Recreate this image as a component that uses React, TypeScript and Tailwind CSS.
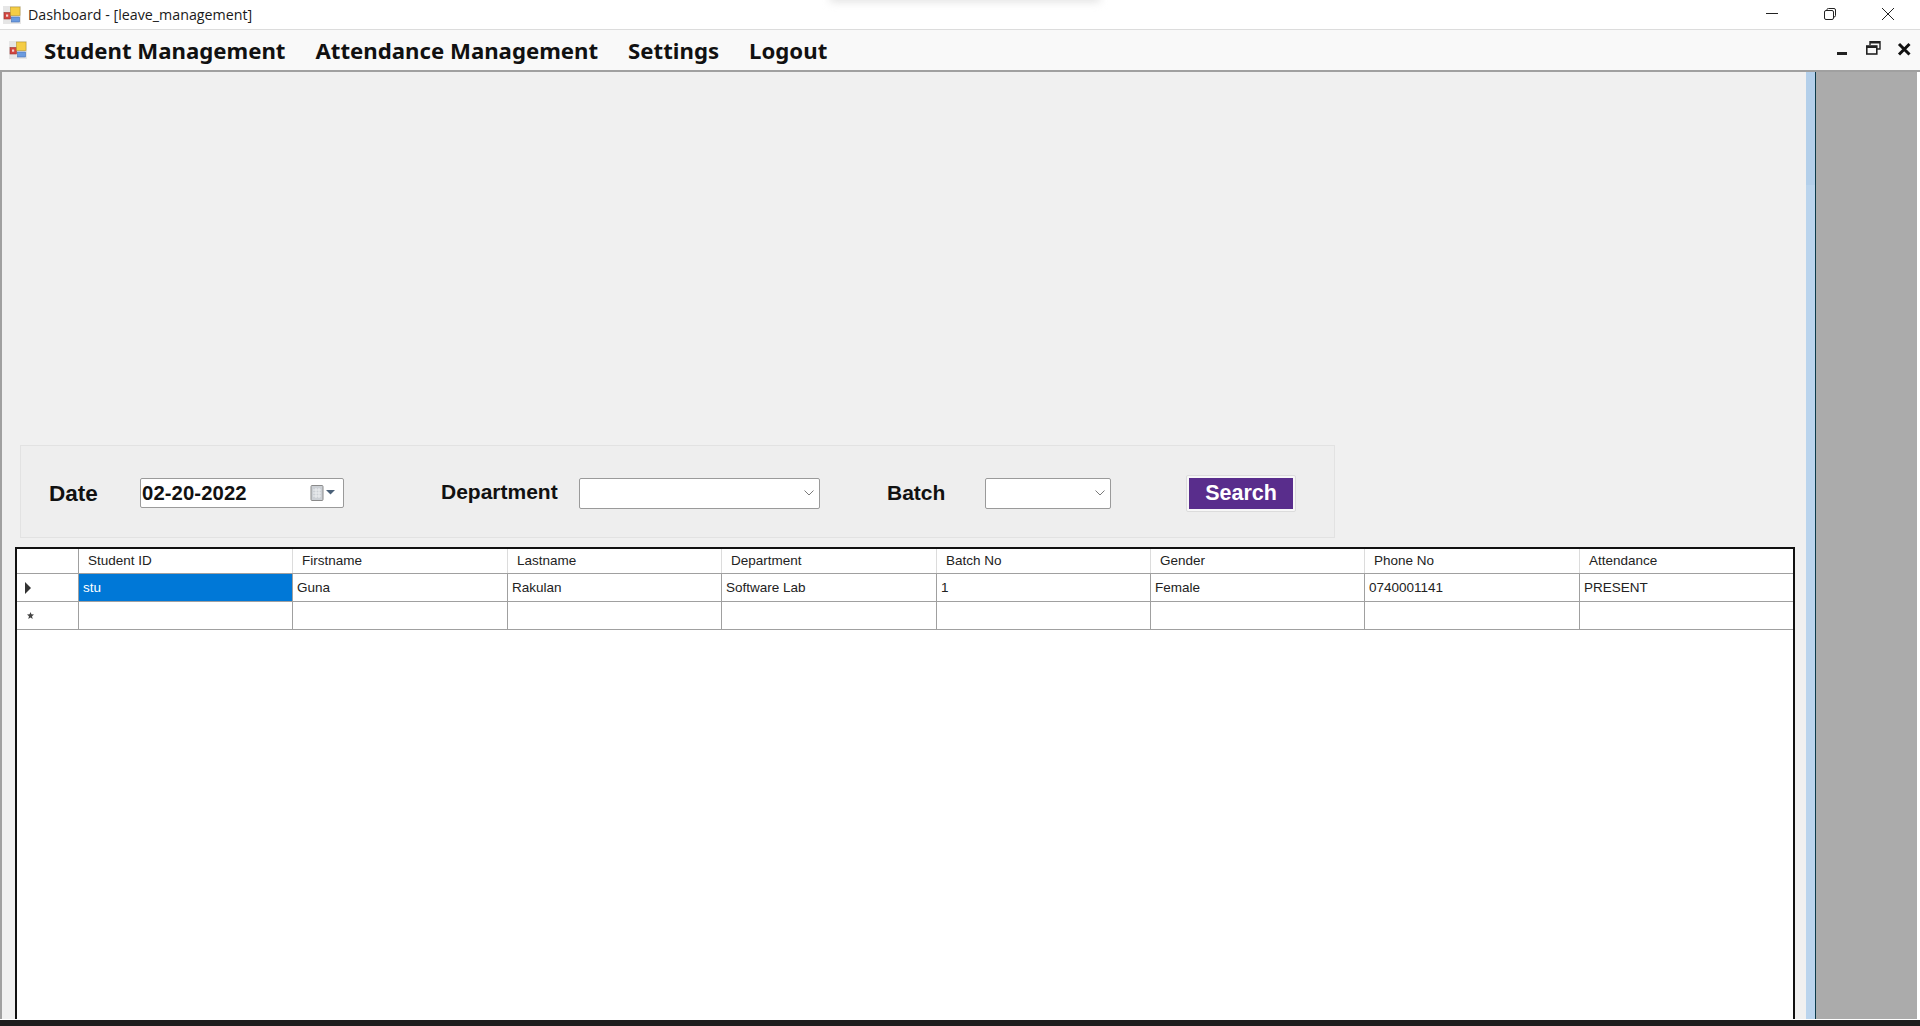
const headers = ["Student ID", "Firstname", "Lastname", "Department", "Batch No", "Gender", "Phone No", "Attendance"];
const row = ["stu", "Guna", "Rakulan", "Software Lab", "1", "Female", "0740001141", "PRESENT"];
const gridCols = "grid grid-cols-[62px_214px_215px_214px_215px_214px_214px_215px_213px]";

const AppIcon = () => (
  <svg width="18" height="18" viewBox="0 0 18 18">
    <rect x="0" y="0" width="18" height="18" fill="#e6e6e6" />
    <rect x="1" y="6.5" width="6.5" height="6.5" fill="#d2453f" stroke="#9a3430" strokeWidth="0.6" />
    <rect x="3" y="8.5" width="2.2" height="2.2" fill="#f3d6d4" />
    <rect x="7.5" y="1" width="9.5" height="8.5" fill="#f5cd45" stroke="#b8962a" strokeWidth="0.6" />
    <rect x="8.5" y="11" width="8" height="5" fill="#6b9be0" stroke="#4470b4" strokeWidth="0.6" />
  </svg>
);

const ComboBox = ({ className }: { className: string }) => (
  <div className={`${className} h-[31px] bg-white border border-[#9a9a9a] rounded-[2px] flex items-center justify-end pr-[5px]`}>
    <svg width="10" height="6" viewBox="0 0 10 6" fill="none" stroke="#7a7a7a" strokeWidth="1">
      <path d="M0.5 0.5 L5 5 L9.5 0.5" />
    </svg>
  </div>
);

const App = () => {
  return (
    <div className="w-[1920px] h-[1026px] flex flex-col overflow-hidden bg-white font-['Liberation_Sans',sans-serif] text-black relative">
      {/* sombra de la ventana de arriba */}
      <div className="absolute left-[830px] top-[-8px] w-[270px] h-[10px] bg-[#e2e2e2] blur-[4px]" />

      {/* title bar */}
      <div className="h-[29px] bg-white flex items-center pl-[3px] pr-[3px] shrink-0">
        <AppIcon />
        <span className="ml-[7px] font-['Open_Sans',sans-serif] text-[14.25px] text-[#1a1a1a]">Dashboard - [leave_management]</span>
        <div className="ml-auto flex">
          <svg width="58" height="29" viewBox="0 0 58 29" fill="none" stroke="#222" strokeWidth="1">
            <path d="M23 13.5 H35" />
          </svg>
          <svg width="58" height="29" viewBox="0 0 58 29" fill="none" stroke="#222" strokeWidth="1">
            <rect x="23.5" y="10.5" width="9" height="9" rx="1.5" />
            <path d="M26 10 V9.5 Q26 8.5 27.5 8.5 H33 Q34.5 8.5 34.5 10 V15.5 Q34.5 17 33 17" />
          </svg>
          <svg width="58" height="29" viewBox="0 0 58 29" fill="none" stroke="#222" strokeWidth="1">
            <path d="M23 8 L35 20 M35 8 L23 20" />
          </svg>
        </div>
      </div>

      {/* menu strip */}
      <div className="h-[43px] shrink-0 bg-[#f9f9f9] border-t border-[#dcdcdc] border-b-2 border-b-[#a0a0a0] flex items-center pl-[9px]">
        <AppIcon />
        <div className="ml-[17px] pt-[2px] flex gap-[30px] font-['Noto_Sans',sans-serif] font-bold text-[22.2px] text-[#111]">
          <span>Student Management</span>
          <span>Attendance Management</span>
          <span>Settings</span>
          <span>Logout</span>
        </div>
        <div className="ml-auto flex">
          <svg width="31" height="40" viewBox="0 0 31 40">
            <rect x="10" y="22" width="10" height="3" fill="#222" />
          </svg>
          <svg width="31" height="40" viewBox="0 0 31 40" fill="none" stroke="#222" strokeWidth="1.6">
            <path d="M12 15 V11.8 H22 V19 H19" strokeWidth="1.4" />
            <path d="M12 12.5 H22" strokeWidth="2" />
            <rect x="8.8" y="16" width="10" height="8" />
            <path d="M8.8 17 H18.8" strokeWidth="2" />
          </svg>
          <svg width="31" height="40" viewBox="0 0 31 40" fill="none" stroke="#111" strokeWidth="3">
            <path d="M10 14 L20.5 24.5 M20.5 14 L10 24.5" />
          </svg>
        </div>
      </div>

      {/* MDI area */}
      <div className="flex-1 min-h-0 flex">
        <div className="w-[2px] bg-[#a0a0a0] shrink-0" />
        <div className="w-[1804px] shrink-0 bg-[#f0f0f0] pt-[373px] overflow-hidden flex flex-col">
          {/* filter panel */}
          <div className="ml-[18px] w-[1315px] h-[93px] shrink-0 border border-[#e2e2e2] bg-[#eeeeee] pl-[28px] pt-[3px] flex items-center">
            <span className="w-[91px] font-bold text-[22.5px] text-[#111] relative top-[1px]">Date</span>
            <div className="w-[204px] h-[30px] bg-white border border-[#9a9a9a] rounded-[2px] flex items-center pl-[1px]">
              <span className="font-bold text-[20.3px] tracking-[0.1px] text-[#111]">02-20-2022</span>
              <svg className="ml-auto mr-[7px]" width="26" height="17" viewBox="0 0 26 17">
                <rect x="1" y="0.5" width="12" height="15" rx="1" fill="#ccd0d5" stroke="#8a8a8a" />
                <path d="M3 5 H11 M3 8 H11 M3 11 H11 M6 3 V13 M9 3 V13" stroke="#eceef0" strokeWidth="1" />
                <path d="M16 5 H25 L20.5 9.5 Z" fill="#4a6078" />
              </svg>
            </div>
            <span className="ml-[97px] w-[138px] font-bold text-[21px] text-[#111] relative top-[-1px]">Department</span>
            <ComboBox className="w-[241px]" />
            <span className="ml-[67px] w-[98px] font-bold text-[21px] text-[#111]">Batch</span>
            <ComboBox className="w-[126px]" />
            <button className="ml-[75px] w-[110px] h-[37px] bg-[#f7f7f7] border border-[#dcdcdc] rounded-[2px] p-[2px]">
              <span className="w-full h-full bg-[#592d8c] text-white font-bold text-[21.5px] flex items-center justify-center">Search</span>
            </button>
          </div>

          {/* data grid */}
          <div className="mt-[9px] ml-[13px] w-[1780px] flex-1 border-2 border-b-0 border-[#111] bg-white text-[13.5px] text-[#222]">
            <div className={`${gridCols} h-[25px] border-b border-[#a0a0a0]`}>
              <div className="border-r border-[#a0a0a0]" />
              {headers.map((h) => (
                <div key={h} className="pl-[9px] pt-[1px] flex items-center border-r border-[#dcdcdc] last:border-r-0">{h}</div>
              ))}
            </div>
            <div className={`${gridCols} h-[28px] border-b border-[#a0a0a0]`}>
              <div className="border-r border-[#a0a0a0] flex items-center pl-[8px]">
                <svg width="6" height="12" viewBox="0 0 6 12"><path d="M0 0 L6 6 L0 12 Z" fill="#333" /></svg>
              </div>
              {row.map((c, i) => (
                <div key={c} className={i === 0 ? "pl-[4px] pt-[1px] flex items-center bg-[#0078d7] text-white border-r border-[#a0a0a0]" : "pl-[4px] pt-[1px] flex items-center border-r border-[#a0a0a0] last:border-r-0"}>{c}</div>
              ))}
            </div>
            <div className={`${gridCols} h-[28px] border-b border-[#a0a0a0]`}>
              <div className="border-r border-[#a0a0a0] flex items-center pl-[10px]">
                <svg width="7" height="7" viewBox="0 0 6 6"><path d="M3 0 L3.8 2 L6 2.2 L4.3 3.6 L4.9 6 L3 4.7 L1.1 6 L1.7 3.6 L0 2.2 L2.2 2 Z" fill="#444" /></svg>
              </div>
              {row.map((c) => (
                <div key={c} className="border-r border-[#a0a0a0] last:border-r-0" />
              ))}
            </div>
          </div>
        </div>

        {/* scrollbar sliver */}
        <div className="w-[9px] shrink-0 flex flex-col">
          <div className="h-[113px] bg-[#b3cfea]" />
          <div className="flex-1 bg-[#bad4ed]" />
        </div>
        <div className="w-[1px] shrink-0 bg-[#0b3a4a]" />
        <div className="w-[101px] shrink-0 bg-[#ababab]" />
      </div>

      <div className="h-[1px] bg-white shrink-0" />
      <div className="h-[6px] bg-[#1e1e1e] shrink-0" />
    </div>
  );
};

export default App;
